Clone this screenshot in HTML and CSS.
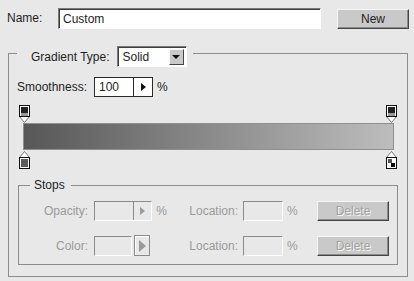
FILE: index.html
```html
<!DOCTYPE html>
<html lang="en">
<head>
  <meta charset="UTF-8">
  <meta name="viewport" content="width=device-width, initial-scale=1.0">
  <title>Gradient Editor</title>
  <link rel="stylesheet" href="styles.css">
</head>
<body>
  <div class="name-row">
    <label class="name-label" for="name">Name:</label>
    <input class="name-field" id="name" type="text" value="Custom">
    <button class="btn btn-new" type="button">New</button>
  </div>

  <fieldset class="group gradient">
    <legend class="gradient-title">
      <span class="title-inner">
        Gradient Type:
        <span class="select">Solid<span class="select-btn"></span></span>
      </span>
    </legend>

    <div class="smooth-row">
      <span class="smooth-label">Smoothness:</span>
      <span class="spin"><span class="spin-value">100</span><span class="spin-arrow"></span></span>
      <span class="unit">%</span>
    </div>

    <div class="editor">
      <div class="track">
        <span class="stop" style="left: 0%">
          <svg width="11" height="18" viewBox="0 0 11 18">
            <path d="M0.5 11.5L5.5 17.5L10.5 11.5" fill="#fff" stroke="#777"/>
            <rect x="0.5" y="0.5" width="10" height="11" fill="#fff" stroke="#111"/>
            <rect x="2" y="2" width="7" height="6" fill="#222"/>
            <rect x="2" y="8" width="7" height="3" fill="#9a9a9a"/>
          </svg>
        </span>
        <span class="stop" style="left: 100%">
          <svg width="11" height="18" viewBox="0 0 11 18">
            <path d="M0.5 11.5L5.5 17.5L10.5 11.5" fill="#fff" stroke="#777"/>
            <rect x="0.5" y="0.5" width="10" height="11" fill="#fff" stroke="#111"/>
            <rect x="2" y="2" width="7" height="6" fill="#222"/>
            <rect x="2" y="8" width="7" height="3" fill="#9a9a9a"/>
          </svg>
        </span>
      </div>
      <div class="bar"></div>
      <div class="track track-bottom">
        <span class="stop" style="left: 0%">
          <svg width="11" height="18" viewBox="0 0 11 18">
            <path d="M5.5 0.5L10.5 6.5H0.5Z" fill="#fff" stroke="#777"/>
            <rect x="0.5" y="6.5" width="10" height="11" fill="#fff" stroke="#111"/>
            <rect x="2" y="8" width="7" height="8" fill="#5c5c5c"/>
          </svg>
        </span>
        <span class="stop" style="left: 100%">
          <svg width="11" height="18" viewBox="0 0 11 18">
            <path d="M5.5 0.5L10.5 6.5H0.5Z" fill="#fff" stroke="#777"/>
            <rect x="0.5" y="6.5" width="10" height="11" fill="#fff" stroke="#111"/>
            <rect x="2" y="8" width="4" height="4" fill="#555"/>
            <rect x="5" y="12" width="4" height="4" fill="#000"/>
          </svg>
        </span>
      </div>
    </div>

    <fieldset class="group stops">
      <legend class="stops-title">Stops</legend>

      <div class="stop-row">
        <span class="field-label">Opacity:</span>
        <span class="field-cell">
          <span class="spin spin-off"><span class="spin-value"></span><span class="spin-arrow"></span></span>
          <span class="unit">%</span>
        </span>
        <span class="field-label">Location:</span>
        <span class="field-cell loc-cell">
          <span class="box"></span>
          <span class="unit">%</span>
        </span>
        <button class="btn btn-delete" type="button" disabled>Delete</button>
      </div>

      <div class="stop-row">
        <span class="field-label">Color:</span>
        <span class="field-cell">
          <span class="box box-color"></span>
          <span class="color-btn"></span>
        </span>
        <span class="field-label">Location:</span>
        <span class="field-cell loc-cell">
          <span class="box"></span>
          <span class="unit">%</span>
        </span>
        <button class="btn btn-delete" type="button" disabled>Delete</button>
      </div>
    </fieldset>
  </fieldset>
</body>
</html>
```

FILE: styles.css
```css
body {
  margin: 0;
  width: 414px;
  height: 281px;
  overflow: hidden;
  background-color: #e8e8e8;
  font: 12px "Liberation Sans", Arial, sans-serif;
  color: #1e1e1e;
}
.name-row {
  display: flex;
  align-items: flex-start;
  padding: 8px 0 0 7px;
  height: 21px;
}
.name-label {
  width: 51px;
  line-height: 21px;
}
.name-field {
  box-sizing: border-box;
  width: 263px;
  height: 21px;
  margin: 0;
  padding: 0 4px;
  border: 1px solid;
  border-color: #7a7a7a #fff #fff #7a7a7a;
  box-shadow: inset 1px 1px 0 #3c3c3c;
  background-color: white;
  font: inherit;
  color: #1e1e1e;
}
.btn {
  box-sizing: border-box;
  height: 20px;
  padding: 0;
  border: 1px solid;
  border-color: #f6f6f6 #444 #444 #f6f6f6;
  box-shadow: inset -1px -1px 0 #8c8c8c;
  background-color: #c9c9c9;
  font: inherit;
  color: #222;
}
.btn-new {
  width: 72px;
  margin: 1px 0 0 16px;
}

.group {
  margin: 0;
  min-width: 0;
  border: 1px solid #8c8c8c;
}
.gradient {
  margin: 17px 6px 0 8px;
  padding: 17px 8px 11px;
}
.gradient-title {
  height: 14px;
  padding: 0 6px 0 14px;
}
.title-inner {
  display: flex;
  align-items: center;
  gap: 7px;
  height: 21px;
}
.select {
  box-sizing: border-box;
  display: flex;
  align-items: center;
  justify-content: space-between;
  width: 70px;
  height: 21px;
  padding: 0 2px 0 5px;
  border: 1px solid;
  border-color: #7a7a7a #fff #fff #7a7a7a;
  box-shadow: inset 1px 1px 0 #3c3c3c;
  background-color: white;
}
.select-btn {
  box-sizing: border-box;
  display: flex;
  align-items: center;
  justify-content: center;
  width: 15px;
  height: 16px;
  border: 1px solid;
  border-color: #f6f6f6 #444 #444 #f6f6f6;
  background-color: #c9c9c9;
}
.select-btn::after {
  content: "";
  border-top: 4px solid #111;
  border-left: 4px solid transparent;
  border-right: 4px solid transparent;
}

.smooth-row {
  display: flex;
  align-items: center;
  height: 20px;
}
.smooth-label {
  width: 77px;
}
.spin {
  box-sizing: border-box;
  display: flex;
  width: 59px;
  height: 20px;
  border: 1px solid #2a2a2a;
  background-color: white;
}
.spin-value {
  box-sizing: border-box;
  width: 39px;
  padding-left: 4px;
  border-right: 1px solid #2a2a2a;
  line-height: 18px;
}
.spin-arrow {
  flex: 1;
  display: flex;
  align-items: center;
  justify-content: center;
}
.spin-arrow::after {
  content: "";
  border-left: 5px solid #111;
  border-top: 4px solid transparent;
  border-bottom: 4px solid transparent;
}
.unit {
  margin-left: 4px;
}

.editor {
  margin-top: 8px;
}
.track {
  position: relative;
  width: 367px;
  height: 18px;
  margin-left: 8px;
}
.track-bottom {
  margin-top: 1px;
}
.stop {
  position: absolute;
  top: 0;
  width: 11px;
  height: 18px;
  margin-left: -6px;
}
.stop svg {
  display: block;
}
.bar {
  box-sizing: border-box;
  width: 371px;
  height: 27px;
  margin-left: 6px;
  border: 1px solid #8f8f8f;
  background: linear-gradient(to right, #575757, #bdbdbd);
}

.stops {
  margin: 9px 1px 0;
  padding: 9px 0 9px 11px;
}
.stops-title {
  height: 14px;
  line-height: 14px;
  padding: 0 6px 0 4px;
}
.stop-row {
  display: grid;
  grid-template-columns: 58px 79px 71px 79px 72px;
  align-items: center;
  height: 20px;
  color: #9a9a9a;
}
.stop-row + .stop-row {
  margin-top: 14px;
}
.field-label {
  text-align: right;
}
.field-cell {
  display: flex;
  align-items: center;
  padding-left: 6px;
}
.loc-cell {
  padding-left: 5px;
}
.spin-off {
  border-color: #8a8a8a #fff #fff #8a8a8a;
  background-color: transparent;
}
.spin-off .spin-value {
  border-right-color: #8a8a8a;
}
.spin-off .spin-arrow::after {
  border-left-color: #9a9a9a;
}
.box {
  box-sizing: border-box;
  width: 40px;
  height: 20px;
  border: 1px solid;
  border-color: #8a8a8a #fff #fff #8a8a8a;
}
.box-color {
  width: 38px;
}
.color-btn {
  box-sizing: border-box;
  display: flex;
  align-items: center;
  justify-content: center;
  width: 16px;
  height: 21px;
  margin-left: 2px;
  border: 1px solid #8a8a8a;
  box-shadow: inset 1px 1px 0 #fff;
}
.color-btn::after {
  content: "";
  border-left: 7px solid #999;
  border-top: 6px solid transparent;
  border-bottom: 6px solid transparent;
}
.btn-delete {
  width: 72px;
  color: #a2a2a2;
  text-shadow: 1px 1px 0 #f4f4f4;
}
```
